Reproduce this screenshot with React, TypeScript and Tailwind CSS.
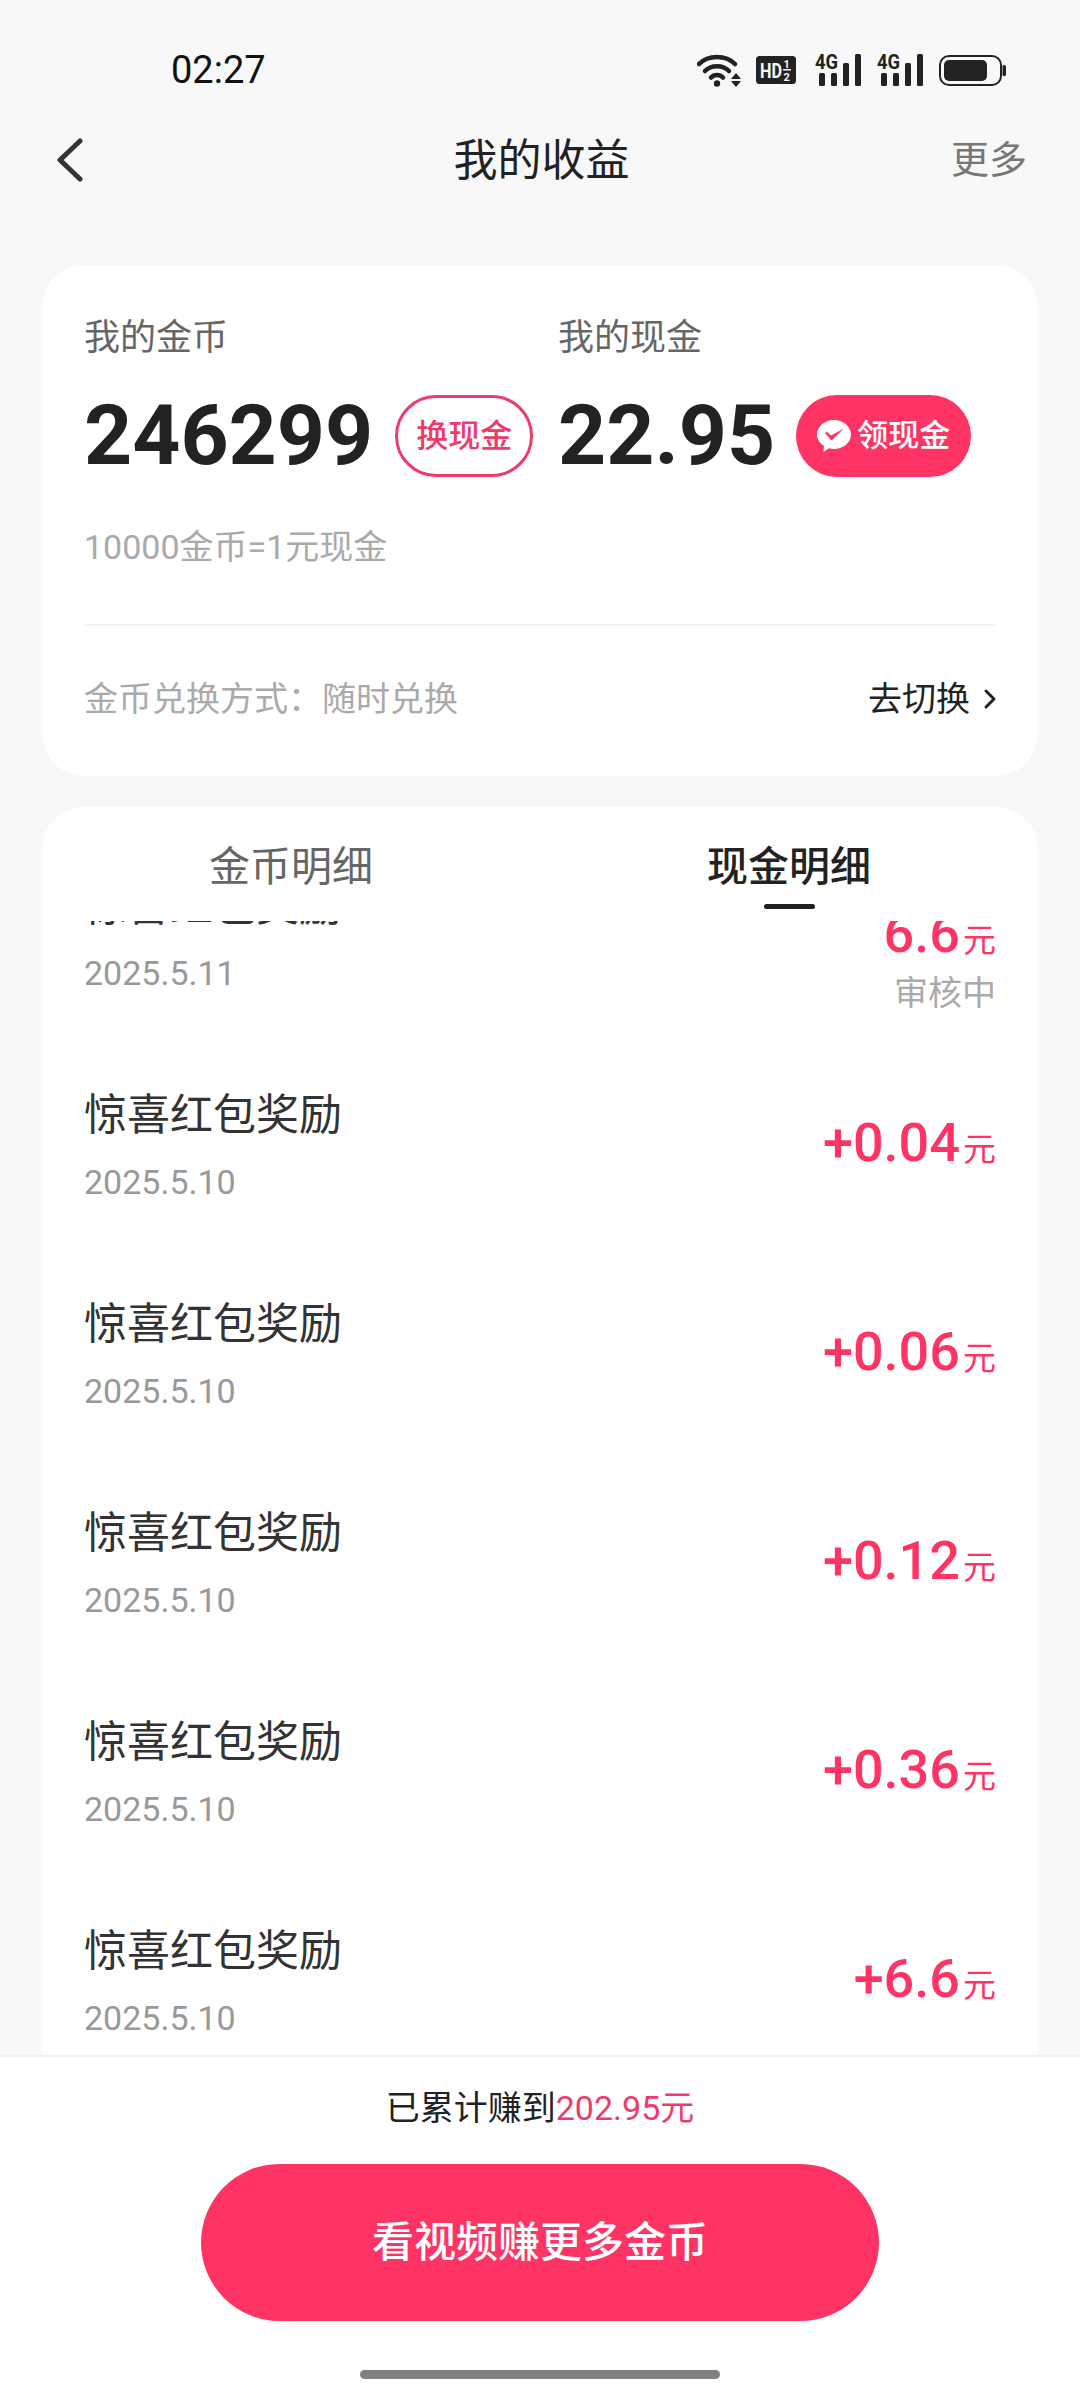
const records = [
  { title: '惊喜红包奖励', date: '2025.5.11', amount: '6.6', status: '审核中' },
  { title: '惊喜红包奖励', date: '2025.5.10', amount: '+0.04' },
  { title: '惊喜红包奖励', date: '2025.5.10', amount: '+0.06' },
  { title: '惊喜红包奖励', date: '2025.5.10', amount: '+0.12' },
  { title: '惊喜红包奖励', date: '2025.5.10', amount: '+0.36' },
  { title: '惊喜红包奖励', date: '2025.5.10', amount: '+6.6' },
];

function WifiIcon() {
  return (
    <svg width="44" height="33" viewBox="0 0 44 33" fill="none">
      <path d="M2 10C11 0.500 29 0.500 38 10" stroke="#222" strokeWidth="4.500" strokeLinecap="round" />
      <path d="M8 17C14 10.500 26 10.500 32 17" stroke="#222" strokeWidth="4.500" strokeLinecap="round" />
      <path d="M14 23.500C17 20 23 20 26 23.500" stroke="#222" strokeWidth="4.500" strokeLinecap="round" />
      <circle cx="20" cy="29.500" r="3.200" fill="#222" />
      <path d="M39 19L44 25H34Z" fill="#222" />
      <path d="M39 33L34 27H44Z" fill="#222" />
    </svg>
  );
}

function HdIcon() {
  return (
    <svg width="40" height="28" viewBox="0 0 40 28" className="ml-[-1px] mr-[3px]">
      <rect width="40" height="28" rx="3.500" fill="#222" />
      <text x="4" y="21.500" fontFamily="Roboto" fontSize="21" fontWeight="700" fill="#f8f8f8" textLength="22" lengthAdjust="spacingAndGlyphs">HD</text>
      <text x="27.500" y="12" fontFamily="Roboto" fontSize="11" fontWeight="700" fill="#f8f8f8">1</text>
      <text x="27.500" y="25" fontFamily="Roboto" fontSize="11" fontWeight="700" fill="#f8f8f8">2</text>
      <rect x="27" y="13" width="8" height="1.500" fill="#f8f8f8" />
    </svg>
  );
}

function SignalIcon() {
  return (
    <svg width="46" height="32" viewBox="0 0 46 32">
      <text x="0" y="15" fontFamily="Roboto" fontSize="20" fontWeight="700" fill="#222" textLength="23" lengthAdjust="spacingAndGlyphs">4G</text>
      <rect x="4" y="19" width="6" height="13" rx="1.500" fill="#222" />
      <rect x="16" y="19" width="6" height="13" rx="1.500" fill="#222" />
      <rect x="28" y="9" width="6" height="23" rx="1.500" fill="#222" />
      <rect x="40" y="0" width="6" height="32" rx="1.500" fill="#222" />
    </svg>
  );
}

function BatteryIcon() {
  return (
    <svg width="67" height="31" viewBox="0 0 67 31" fill="none">
      <rect x="1" y="1" width="61" height="29" rx="9" stroke="#222" strokeWidth="2" />
      <rect x="5" y="5" width="43" height="21" rx="5" fill="#222" />
      <rect x="63.500" y="10" width="3.500" height="11" rx="1.500" fill="#222" />
    </svg>
  );
}

function WechatCheckIcon() {
  return (
    <svg width="34" height="32" viewBox="0 0 34 32">
      <path d="M17 0C26.400 0 34 6.600 34 14.500S26.400 29 17 29c-2 0-3.600-.3-5.300-.8L6.500 32l.4-6.200C2.700 23 0 19 0 14.500 0 6.600 7.600 0 17 0Z" fill="#fff" />
      <path d="M8 13l2-1.200 4 3.700L27 8.500l-11.500 11.200c-.7.600-1.500.500-2.100-.1Z" fill="#ff3465" />
    </svg>
  );
}

export default function App() {
  return (
    <div className="flex h-[2400px] w-[1080px] flex-col overflow-hidden bg-[#f8f8f8] font-['Roboto','Noto_Sans_CJK_SC',sans-serif] text-[#222]">
      <div className="flex h-[100px] shrink-0 items-center justify-between pl-[171px] pr-[74px] pt-[40px]">
        <span className="text-[38px] leading-[40px] text-[#111]">02:27</span>
        <div className="flex items-center gap-[16px]">
          <WifiIcon />
          <HdIcon />
          <SignalIcon />
          <SignalIcon />
          <BatteryIcon />
        </div>
      </div>

      <div className="grid h-[120px] shrink-0 grid-cols-[1fr_auto_1fr] items-center pl-[56px] pr-[53px]">
        <svg width="28" height="44" viewBox="0 0 28 44" fill="none">
          <path d="M24 3L4 22L24 41" stroke="#333" strokeWidth="5" strokeLinecap="round" strokeLinejoin="round" />
        </svg>
        <span className="translate-y-[1px] text-[44px] leading-[56px] text-[#222]">我的收益</span>
        <span className="justify-self-end text-[38px] leading-[50px] text-[#777]">更多</span>
      </div>

      <div className="mx-[42px] mt-[45px] h-[511px] shrink-0 rounded-[42px] bg-white px-[42px] pt-[48px]">
        <div className="grid grid-cols-[474px_1fr]">
          <div>
            <div className="text-[36px] leading-[50px] text-[#666]">我的金币</div>
            <div className="mt-[32px] flex h-[82px] items-center">
              <span className="text-[84px] font-bold leading-[82px] text-[#222]">246299</span>
              <span className="ml-[22px] flex h-[82px] w-[138px] items-center justify-center rounded-full border-[3px] border-[#ee3b6b] text-[32px] font-medium text-[#ee3b6b]">
                换现金
              </span>
            </div>
          </div>
          <div>
            <div className="text-[36px] leading-[50px] text-[#666]">我的现金</div>
            <div className="mt-[32px] flex h-[82px] items-center">
              <span className="text-[84px] font-bold leading-[82px] text-[#222]">22.95</span>
              <span className="ml-[21px] flex h-[82px] w-[175px] items-center justify-center gap-[6px] rounded-full bg-[#ff3465] text-[31px] font-medium text-white">
                <WechatCheckIcon />
                领现金
              </span>
            </div>
          </div>
        </div>
        <div className="mt-[48px] text-[34px] leading-[44px] text-[#aaa]">10000金币=1元现金</div>
        <div className="mt-[55px] h-[2px] bg-[#f3f3f3]" />
        <div className="flex h-[146px] items-center justify-between">
          <span className="text-[34px] leading-[50px] text-[#aaa]">金币兑换方式：随时兑换</span>
          <span className="flex items-center gap-[12px] text-[34px] leading-[50px] text-[#222]">
            去切换
            <svg width="16" height="24" viewBox="0 0 16 24" fill="none" className="-mr-[2px]">
              <path d="M4 4L12 12L4 20" stroke="#222" strokeWidth="3" strokeLinecap="round" strokeLinejoin="round" />
            </svg>
          </span>
        </div>
      </div>

      <div className="mx-[42px] mt-[31px] flex min-h-0 flex-1 flex-col rounded-t-[42px] bg-white">
        <div className="grid h-[114px] shrink-0 grid-cols-2 pt-[35px] text-center">
          <span className="text-[41px] leading-[50px] text-[#666]">金币明细</span>
          <div className="flex flex-col items-center">
            <span className="text-[41px] font-medium leading-[50px] text-[#222]">现金明细</span>
            <span className="mt-[12px] h-[5px] w-[51px] rounded-full bg-[#222]" />
          </div>
        </div>
        <div className="min-h-0 flex-1 overflow-hidden px-[42px]">
          <div className="-mt-[87px]">
            {records.map((item, idx) => (
              <div key={idx} className="flex h-[209px] justify-between pt-[47px]">
                <div>
                  <div className="text-[43px] leading-[50px] text-[#333]">{item.title}</div>
                  <div className="mt-[20px] text-[34px] leading-[44px] text-[#999]">{item.date}</div>
                </div>
                <div className="flex flex-col items-end pt-[23px]">
                  <div className="flex items-baseline text-[#ff3465]">
                    <span className="text-[54px] font-medium leading-[60px]">{item.amount}</span>
                    <span className="ml-[3px] text-[33px] leading-[60px]">元</span>
                  </div>
                  {item.status && <div className="text-[34px] leading-[44px] text-[#aaa]">{item.status}</div>}
                </div>
              </div>
            ))}
          </div>
        </div>
      </div>

      <div className="flex h-[345px] shrink-0 flex-col items-center border-t-2 border-[#f0f0f0] bg-white pt-[29px]">
        <div className="text-[34px] leading-[44px] text-[#222]">
          已累计赚到<span className="text-[#ee3b6b]">202.95元</span>
        </div>
        <div className="mt-[34px] flex h-[157px] w-[678px] items-center justify-center rounded-full bg-[#ff3465] text-[42px] font-medium text-white">
          看视频赚更多金币
        </div>
        <div className="mt-[49px] h-[9px] w-[360px] rounded-full bg-[#808080]" />
      </div>
    </div>
  );
}
